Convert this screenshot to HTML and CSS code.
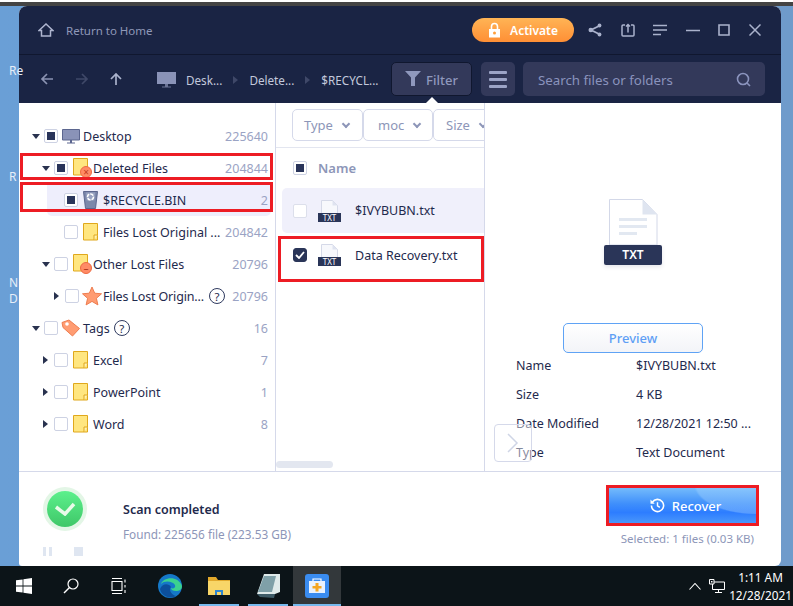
FILE: index.html
```html
<!DOCTYPE html>
<html lang="en">
<head>
    <meta charset="UTF-8">
    <title>Data Recovery</title>
    <link rel="stylesheet" href="styles.css">
</head>
<body>

<svg class="sprite" width="0" height="0">
    <symbol id="folder" viewBox="0 0 15 18"><path d="M.5.5h14v16.500H.5z" fill="#ffe680" stroke="#e0a81c"/><path d="M11 17v-5h3.500" fill="#fff3b8" stroke="#e0a81c"/></symbol>
    <symbol id="folder-plain" viewBox="0 0 15 18"><path d="M.5.5h14v16.500H.5z" fill="#ffe680" stroke="#e0a81c"/></symbol>
    <symbol id="monitor" viewBox="0 0 18 15"><path d="M.5.5h17v10.500H.5z" fill="#8a93b8" stroke="#5c668f"/><path d="M8 11h2v2.500H8zM5 13.500h8v1H5z" fill="#5c668f"/></symbol>
    <symbol id="txt-small" viewBox="0 0 23 22"><path d="M3.500.5h11l5 5V15h-16z" fill="#f7f8fc" stroke="#d5d9e8"/><path d="M14.500.5v5h5z" fill="#dfe3f0"/><path d="M0 13h23v9H0z" fill="#2a3558"/></symbol>
</svg>

<div class="top-strip"></div>

<div class="desktop">
    <span class="desk-label label-a">Re</span>
    <span class="desk-label label-b">R</span>
    <span class="desk-label label-c">N</span>
    <span class="desk-label label-d">D</span>

    <div class="window">
        <!-- Title bar -->
        <div class="title-bar">
            <svg class="home-icon" viewBox="0 0 16 14" width="16" height="14"><path d="M1 7.500 8 1l7 6.500h-2.500V13h-9V7.500z" fill="none" stroke="#aeb5cf" stroke-width="1.500"/></svg>
            <span class="home-text">Return to Home</span>
            <button class="activate">
                <svg viewBox="0 0 13 16" width="13" height="16"><path d="M3.500 7V4.500a3 3 0 0 1 6 0V7" fill="none" stroke="#fff" stroke-width="1.600"/><path d="M1 7h11v8.500H1z" fill="#fff"/><circle cx="6.500" cy="11" r="1.500" fill="#ff9f3a"/></svg>
                Activate
            </button>
            <div class="win-icons">
                <svg viewBox="0 0 14 14" width="14" height="14"><path d="M12 2.500 3 7l9 4.500" fill="none" stroke="#aab2cc" stroke-width="1.800"/><circle cx="2.800" cy="7" r="2.300" fill="#aab2cc"/><circle cx="11.500" cy="2.500" r="1.900" fill="#aab2cc"/><circle cx="11.500" cy="11.500" r="1.900" fill="#aab2cc"/></svg>
                <svg viewBox="0 0 14 14" width="14" height="14"><path d="M4 2H2a1 1 0 0 0-1 1v9a1 1 0 0 0 1 1h10a1 1 0 0 0 1-1V3a1 1 0 0 0-1-1h-2" fill="none" stroke="#aab2cc" stroke-width="1.500"/><path d="M7 9.500V1.500M5 3.500l2-2 2 2" fill="none" stroke="#aab2cc" stroke-width="1.500"/></svg>
                <svg viewBox="0 0 14 12" width="14" height="12"><path d="M0 1.500h14M0 6h14M0 10.500h8" stroke="#aab2cc" stroke-width="1.500"/></svg>
                <svg viewBox="0 0 14 14" width="14" height="14"><path d="M0 7.500h14" stroke="#aab2cc" stroke-width="1.500"/></svg>
                <svg viewBox="0 0 12 12" width="12" height="12"><path d="M1 1h10v10H1z" fill="none" stroke="#aab2cc" stroke-width="1.600"/></svg>
                <svg viewBox="0 0 12 12" width="12" height="12"><path d="m.5.5 11 11M11.500.5l-11 11" stroke="#aab2cc" stroke-width="1.500"/></svg>
            </div>
        </div>

        <!-- Navigation -->
        <div class="nav-bar">
            <div class="nav-arrows">
                <svg viewBox="0 0 14 14" width="14" height="14"><path d="M13 7H2M7 2 2 7l5 5" fill="none" stroke="#8b93b2" stroke-width="1.700"/></svg>
                <svg viewBox="0 0 14 14" width="14" height="14"><path d="M1 7h11M7 2l5 5-5 5" fill="none" stroke="#3f4868" stroke-width="1.700"/></svg>
                <svg viewBox="0 0 14 14" width="14" height="14"><path d="M7 13V2M2 7l5-5 5 5" fill="none" stroke="#aab2cc" stroke-width="1.700"/></svg>
            </div>
            <div class="crumbs">
                <svg class="crumb-pc" viewBox="0 0 19 16" width="19" height="16"><path d="M0 0h19v12H0z" fill="#8a93b8"/><path d="M8 12h3v2.500H8zM5 14.500h9v1H5z" fill="#6b7496"/></svg>
                <span class="crumb">Desk...</span>
                <span class="crumb-sep"></span>
                <span class="crumb">Delete...</span>
                <span class="crumb-sep"></span>
                <span class="crumb">$RECYCL...</span>
            </div>
            <button class="filter-btn">
                <svg viewBox="0 0 16 15" width="16" height="15"><path d="M0 0h16L10 6.500V15H6V6.500z" fill="#8f98bd"/></svg>
                Filter
            </button>
            <button class="menu-btn"><span></span><span></span><span></span></button>
            <div class="search">
                <span>Search files or folders</span>
                <svg viewBox="0 0 15 15" width="15" height="15"><circle cx="7" cy="7" r="5.500" fill="none" stroke="#8a93bd" stroke-width="1.600"/><path d="m11 11 3 3" stroke="#8a93bd" stroke-width="1.600"/></svg>
            </div>
        </div>

        <!-- Main panels -->
        <div class="panels">
            <div class="tree">
                <div class="row">
                    <span class="caret down"></span><span class="check partial"></span>
                    <svg class="icon" width="18" height="15"><use href="#monitor"/></svg>
                    <span class="name">Desktop</span><span class="count">225640</span>
                </div>
                <div class="row lvl1">
                    <span class="caret down"></span><span class="check partial"></span>
                    <span class="icon-wrap"><svg width="15" height="18"><use href="#folder-plain"/></svg><span class="badge">×</span></span>
                    <span class="name">Deleted Files</span><span class="count">204844</span>
                </div>
                <div class="row lvl2 selected">
                    <span class="check partial"></span>
                    <svg class="icon" viewBox="0 0 15 18" width="15" height="18"><path d="M.5.5h14l-2 17h-10z" fill="#7c87ab" stroke="#5c668f"/><path d="M3 1.500h9l-.7 8H3.700z" fill="#98a2c2"/><circle cx="7.500" cy="6" r="3" fill="none" stroke="#fff" stroke-width="1.600" stroke-dasharray="3.500 1"/></svg>
                    <span class="name">$RECYCLE.BIN</span><span class="count">2</span>
                </div>
                <div class="row lvl2">
                    <span class="check"></span>
                    <svg class="icon" width="15" height="18"><use href="#folder"/></svg>
                    <span class="name">Files Lost Original ...</span><span class="count">204842</span>
                </div>
                <div class="row lvl1">
                    <span class="caret down"></span><span class="check"></span>
                    <span class="icon-wrap"><svg width="15" height="18"><use href="#folder-plain"/></svg><span class="badge minus">–</span></span>
                    <span class="name">Other Lost Files</span><span class="count">20796</span>
                </div>
                <div class="row lvl2 has-caret">
                    <span class="caret right"></span><span class="check"></span>
                    <svg class="icon star" viewBox="0 0 20 20" width="20" height="20"><path d="m10 1 2.700 6.200 6.800.6-5.100 4.500 1.500 6.600L10 15.400l-5.900 3.500 1.500-6.600L.5 7.800l6.800-.6z" fill="#ff9c72" stroke="#ee7d50"/></svg>
                    <span class="name name-short">Files Lost Origin...</span><span class="help">?</span><span class="count">20796</span>
                </div>
                <div class="row">
                    <span class="caret down"></span><span class="check"></span>
                    <svg class="icon tag" viewBox="0 0 20 18" width="20" height="18"><path d="M1 3.500 8 1l10.500 8.500-7 7.500L2 8.500z" fill="#ff9c72" stroke="#ee7d50" stroke-linejoin="round"/><circle cx="6" cy="5" r="1.800" fill="#fff"/></svg>
                    <span class="name">Tags</span><span class="help">?</span><span class="count">16</span>
                </div>
                <div class="row lvl1">
                    <span class="caret right"></span><span class="check"></span>
                    <svg class="icon" width="15" height="18"><use href="#folder"/></svg>
                    <span class="name">Excel</span><span class="count">7</span>
                </div>
                <div class="row lvl1">
                    <span class="caret right"></span><span class="check"></span>
                    <svg class="icon" width="15" height="18"><use href="#folder"/></svg>
                    <span class="name">PowerPoint</span><span class="count">1</span>
                </div>
                <div class="row lvl1">
                    <span class="caret right"></span><span class="check"></span>
                    <svg class="icon" width="15" height="18"><use href="#folder"/></svg>
                    <span class="name">Word</span><span class="count">8</span>
                </div>
            </div>

            <div class="list">
                <div class="filters">
                    <div class="chip chip-type"><span>Type</span><i class="chev"></i></div>
                    <div class="chip chip-mod"><span>moc</span><i class="chev"></i></div>
                    <div class="chip chip-size"><span>Size</span><i class="chev"></i></div>
                </div>
                <div class="list-head"><span class="check partial"></span><span>Name</span></div>
                <div class="file hover">
                    <span class="check"></span>
                    <span class="txt-icon"><svg width="23" height="22"><use href="#txt-small"/></svg><b>TXT</b></span>
                    <span>$IVYBUBN.txt</span>
                </div>
                <div class="file">
                    <span class="check checked"><svg viewBox="0 0 10 8" width="10" height="8"><path d="m1 4 3 3 5-6" fill="none" stroke="#fff" stroke-width="1.800"/></svg></span>
                    <span class="txt-icon"><svg width="23" height="22"><use href="#txt-small"/></svg><b>TXT</b></span>
                    <span>Data Recovery.txt</span>
                </div>
                <div class="scroll-thumb"></div>
            </div>

            <div class="details">
                <div class="big-file">
                    <svg viewBox="0 0 50 46" width="50" height="46"><path d="M1.500.5h33l14.500 15V46H1.500z" fill="#fff" stroke="#d3d8e8"/><path d="M34.500.5v15H49z" fill="#dfe5f0"/><path d="M11 19h28v3H11zM11 26h28v3H11zM11 33h18v3H11z" fill="#e2e8f1"/></svg>
                    <span class="big-tag">TXT</span>
                </div>
                <button class="preview">Preview</button>
                <dl class="props">
                    <dt>Name</dt><dd>$IVYBUBN.txt</dd>
                    <dt>Size</dt><dd>4 KB</dd>
                    <dt>Date Modified</dt><dd>12/28/2021 12:50 ...</dd>
                    <dt>Type</dt><dd>Text Document</dd>
                </dl>
                <div class="next-btn"><svg viewBox="0 0 12 20" width="12" height="20"><path d="m1 1 9 9-9 9" fill="none" stroke="#cfd5e6" stroke-width="1.500"/></svg></div>
            </div>
        </div>

        <!-- Footer -->
        <div class="footer">
            <div class="status">
                <div class="ok-icon"><svg viewBox="0 0 22 14" width="22" height="14"><path d="m2 5 9 7 9-10" fill="none" stroke="#e9fbe9" stroke-width="3.500"/></svg></div>
                <div class="player"><span class="pause"></span><span class="stop"></span></div>
            </div>
            <div class="scan-text">
                <strong>Scan completed</strong>
                <span>Found: 225656 file (223.53 GB)</span>
            </div>
            <div class="recover-box">
                <button class="recover">
                    <svg viewBox="0 0 16 16" width="15" height="15"><path d="M2.500 4.500A6.500 6.500 0 1 1 1.500 8" fill="none" stroke="#fff" stroke-width="1.700"/><path d="M.5 1.500v4.500h4.500z" fill="#fff"/><path d="M8 4.500V8.500l2.500 1.500" fill="none" stroke="#fff" stroke-width="1.500"/></svg>
                    Recover
                </button>
                <span>Selected: 1 files (0.03 KB)</span>
            </div>
        </div>
    </div>

    <!-- Red annotation boxes -->
    <div class="mark mark-deleted"></div>
    <div class="mark mark-recycle"></div>
    <div class="mark mark-data"></div>
    <div class="mark mark-recover"></div>
</div>

<!-- Taskbar -->
<div class="taskbar">
    <div class="task-item"><svg viewBox="0 0 16 16" width="16" height="16"><path d="M0 2.300 6.600 1.400v6.200H0zM7.400 1.300 16 0v7.600H7.400zM0 8.400h6.600v6.200L0 13.700zM7.400 8.400H16V16l-8.600-1.300z" fill="#fff"/></svg></div>
    <div class="task-item"><svg class="nudge" viewBox="0 0 16 16" width="16" height="16"><circle cx="10" cy="6" r="5" fill="none" stroke="#fff" stroke-width="1.200"/><path d="M6.500 9.500 1 15" stroke="#fff" stroke-width="1.500"/></svg></div>
    <div class="task-item"><svg class="nudge" viewBox="0 0 16 16" width="16" height="16"><path d="M1 .5h10M1 15.500h10M1 3.500h10v9H1zM14 1.500v3M14 7v2.500M14 12v3" fill="none" stroke="#fff" stroke-width="1.100"/></svg></div>
    <div class="task-apps">
        <div class="task-item"><svg viewBox="0 0 24 24" width="24" height="24"><circle cx="12" cy="12" r="12" fill="#1578c8"/><path d="M3 10C5 3 20 1 24 12c0 4-3 5-6 5-3 0-5-1-5-3 2 1 5 0 4-3-2-4-11-5-14-1z" fill="#3bd18f"/><path d="M2 15c2-6 9-6 11-2-2 2-1 7 5 9-7 4-15-1-16-7z" fill="#0c4f9c"/></svg></div>
        <div class="task-item running"><svg viewBox="0 0 22 20" width="22" height="20"><path d="M0 1h8l2 3h12v4H0z" fill="#e2a92c"/><path d="M0 5h22v14H0z" fill="#f8d668"/><path d="M7 14h8v5H7z" fill="#2f86d0"/><path d="M9 16h4v3H9z" fill="#f8d668"/></svg></div>
        <div class="task-item running"><svg viewBox="0 0 23 24" width="23" height="24"><path d="M7 0h16v18l-5 2H0z" fill="#dfeaea"/><path d="M7 2h12l-4 16H1z" fill="#7fa0a8"/><path d="M0 20l3 3 14 1 1-4z" fill="#3f5c68"/></svg></div>
        <div class="task-item running active"><svg viewBox="0 0 24 24" width="24" height="24"><rect width="24" height="24" rx="3" fill="#3a8cf0"/><path d="M8 7V5h8v2" fill="none" stroke="#fff" stroke-width="1.200"/><path d="M4 7h16v12H4z" fill="#e9f2ff"/><path d="M10.500 9h3v3h3v2.500h-3v3h-3v-3h-3V12h3z" fill="#f4a623"/></svg></div>
    </div>
    <div class="tray">
        <svg class="tray-up" viewBox="0 0 12 7" width="12" height="7"><path d="m.5 6.500 5.500-6 5.500 6" fill="none" stroke="#fff" stroke-width="1.100"/></svg>
        <svg viewBox="0 0 16 14" width="16" height="14"><path d="M3.500 3H15.500v7.500H3.500zM9.500 10.500v2.500M6 13.500h7" fill="none" stroke="#fff"/><path d="M.5.500h4.500v4.500H.5z" fill="#0c1418" stroke="#fff"/><path d="M2 2h1.500v1.500H2z" fill="#fff"/></svg>
        <div class="clock"><span>1:11 AM</span><span>12/28/2021</span></div>
    </div>
</div>

</body>
</html>
```

FILE: styles.css
```css
* {
    box-sizing: border-box;
}
body {
    margin: 0;
    width: 793px;
    height: 606px;
    overflow: hidden;
    display: flex;
    flex-direction: column;
    font-family: "Noto Sans", sans-serif;
    font-size: 12.5px;
    color: #1f2a4d;
    background-color: #fff;
}
button {
    font-family: inherit;
    border: none;
}
.sprite {
    position: absolute;
}
.top-strip {
    height: 4px;
    margin-top: 2px;
    background-color: #444;
    flex: none;
}
.desktop {
    position: relative;
    flex: 1;
    min-height: 0;
    padding-left: 19px;
    padding-right: 12px;
    background: linear-gradient(90deg, #6a9fd6 0, #6f9bcb 100%);
}
.desk-label {
    position: absolute;
    left: 9px;
    color: #e6eef8;
    font-size: 12px;
}
.label-a { top: 56px; }
.label-b { top: 162px; }
.label-c { top: 268px; }
.label-d { top: 284px; }

.window {
    height: 100%;
    display: flex;
    flex-direction: column;
    background-color: #fff;
    border-radius: 8px 8px 6px 3px;
    overflow: hidden;
}

/* Title bar */
.title-bar {
    height: 49px;
    flex: none;
    display: flex;
    align-items: center;
    padding-right: 20px;
    background-color: #1a2444;
    border-bottom: 1px solid #10172f;
    color: #8f98b8;
}
.home-icon {
    margin-left: 19px;
}
.home-text {
    margin-left: 12px;
    font-size: 11.500px;
}
.activate {
    margin-left: auto;
    width: 102px;
    height: 24px;
    display: flex;
    align-items: center;
    justify-content: center;
    gap: 9px;
    border-radius: 12px;
    background: linear-gradient(#ffb455, #ff8f35);
    color: #fff;
    font-size: 12px;
    font-weight: 600;
}
.win-icons {
    margin-left: 14px;
    display: flex;
    align-items: center;
    gap: 18.600px;
}

/* Navigation */
.nav-bar {
    height: 48px;
    flex: none;
    display: flex;
    align-items: center;
    padding-left: 21px;
    background-color: #1a2444;
}
.nav-arrows {
    display: flex;
    gap: 20.500px;
}
.crumbs {
    margin-left: 34px;
    width: 234px;
    display: flex;
    align-items: center;
    padding-top: 1px;
    color: #c3c9dc;
    font-size: 11.700px;
}
.crumb-pc {
    margin-right: 10px;
}
.crumb-sep {
    width: 0;
    height: 0;
    margin: 0 11px;
    border-left: 5px solid #3f4868;
    border-top: 4px solid transparent;
    border-bottom: 4px solid transparent;
}
.filter-btn {
    position: relative;
    width: 81px;
    height: 34px;
    padding-top: 2px;
    display: flex;
    align-items: center;
    justify-content: center;
    gap: 5px;
    background-color: #33395a;
    border: 1px solid #10172f;
    border-radius: 5px;
    color: #8f98bd;
    font-size: 13px;
    font-weight: 500;
}
.filter-btn svg {
    margin-top: -2px;
}
.filter-btn::after {
    content: "";
    position: absolute;
    left: 34px;
    bottom: -8px;
    border-left: 6px solid transparent;
    border-right: 6px solid transparent;
    border-bottom: 6px solid #fff;
}
.menu-btn {
    width: 34px;
    height: 34px;
    margin-left: 9px;
    display: flex;
    flex-direction: column;
    align-items: center;
    justify-content: center;
    gap: 4px;
    background-color: #33395a;
    border-radius: 5px;
}
.menu-btn span {
    width: 18px;
    height: 3px;
    border-radius: 1px;
    background-color: #9ca4c6;
}
.search {
    width: 242px;
    height: 34px;
    margin-left: 8px;
    padding: 1px 14px 0 15px;
    display: flex;
    align-items: center;
    justify-content: space-between;
    background-color: #33395a;
    border-radius: 5px;
    color: #8a93bd;
    font-size: 13.300px;
}

/* Panels */
.panels {
    flex: 1;
    min-height: 0;
    display: flex;
    border-bottom: 1px solid #d5d9ea;
}
.tree {
    width: 257px;
    padding: 17px 7px 0 0;
    border-right: 1px solid #d5d9ea;
    flex: none;
}
.row {
    height: 32px;
    display: flex;
    align-items: center;
    padding-left: 12px;
}
.row .caret {
    margin-right: 4px;
}
.lvl1 {
    padding-left: 22px;
}
.lvl2 {
    padding-left: 45px;
}
.lvl2.has-caret {
    padding-left: 33px;
}
.selected {
    margin-left: 28px;
    margin-right: -3px;
    padding-left: 17px;
    padding-right: 3px;
    background-color: #eeeefc;
    border-radius: 0 0 5px 5px;
}
.caret {
    width: 9px;
    height: 9px;
    flex: none;
    display: flex;
    align-items: center;
    justify-content: center;
}
.caret.down::before {
    content: "";
    border-left: 4.500px solid transparent;
    border-right: 4.500px solid transparent;
    border-top: 5px solid #29324f;
}
.caret.right::before {
    content: "";
    border-top: 4.500px solid transparent;
    border-bottom: 4.500px solid transparent;
    border-left: 5px solid #29324f;
}
.check {
    width: 14px;
    height: 14px;
    flex: none;
    display: flex;
    align-items: center;
    justify-content: center;
    background-color: #fff;
    border: 1px solid #cdd2e3;
    border-radius: 2px;
}
.check.partial::before {
    content: "";
    width: 8px;
    height: 8px;
    background-color: #29345a;
}
.check.checked {
    background-color: #2a3558;
    border-color: #2a3558;
    border-radius: 3px;
}
.icon {
    margin-left: 4px;
    flex: none;
}
.lvl1 .icon,
.lvl2 .icon {
    margin-left: 5px;
}
.lvl2 .star,
.tag {
    margin-left: 3px;
}
.name {
    margin-left: 3px;
    white-space: nowrap;
}
.lvl1 .name,
.lvl2 .name {
    margin-left: 5px;
}
.lvl2 .star + .name {
    margin-left: 1px;
}
.tag + .name {
    margin-left: 2px;
}
.name-short {
    width: 102px;
    letter-spacing: -0.15px;
}
.icon-wrap {
    position: relative;
    width: 15px;
    height: 18px;
    margin-left: 5px;
    margin-top: -2px;
    flex: none;
}
.icon-wrap svg {
    display: block;
}
.badge {
    position: absolute;
    right: -4px;
    bottom: -2px;
    width: 12px;
    height: 12px;
    display: flex;
    align-items: center;
    justify-content: center;
    border-radius: 50%;
    background-color: #ff8b66;
    border: 1px solid #ee6a42;
    color: #c43a1e;
    font-size: 10px;
    line-height: 1;
}
.badge.minus {
    color: #b03418;
}
.count {
    margin-left: auto;
    color: #9aa3c4;
}
.help {
    width: 16px;
    height: 16px;
    margin-left: 4px;
    display: flex;
    align-items: center;
    justify-content: center;
    border: 1.500px solid #2f3a5f;
    border-radius: 50%;
    font-size: 11.500px;
}

/* File list */
.list {
    position: relative;
    width: 209px;
    flex: none;
    border-right: 1px solid #d5d9ea;
    overflow: hidden;
}
.filters {
    height: 45px;
    padding: 6px 0 0 16px;
    display: flex;
    border-bottom: 1px solid #e3e6f0;
}
.chip {
    height: 32px;
    display: flex;
    align-items: center;
    gap: 10px;
    padding-left: 11px;
    flex: none;
    border: 1px solid #d5d9ea;
    border-radius: 5px;
    color: #8d96b8;
    font-size: 13px;
}
.chip-type { width: 71px; }
.chip-mod { width: 70px; padding-left: 14px; }
.chip-size { width: 70px; padding-left: 12px; }
.chev {
    width: 6px;
    height: 6px;
    margin-top: -3px;
    border-right: 2px solid #8d96b8;
    border-bottom: 2px solid #8d96b8;
    transform: rotate(45deg);
}
.list-head {
    height: 40px;
    display: flex;
    align-items: center;
    gap: 11px;
    padding-left: 17px;
    color: #8d96b8;
    font-size: 13px;
    font-weight: 600;
}
.file {
    height: 45px;
    margin-left: 6px;
    padding: 0 0 1px 11px;
    display: flex;
    align-items: center;
}
.file.hover {
    padding-bottom: 0;
    background-color: #f0f0fb;
    border-radius: 5px 0 0 5px;
}
.file.hover .check {
    border-color: #dcdfeb;
}
.txt-icon {
    position: relative;
    width: 23px;
    height: 22px;
    margin: 0 14px 0 11px;
}
.txt-icon svg {
    display: block;
}
.txt-icon b {
    position: absolute;
    left: 0;
    right: 0;
    bottom: 0;
    color: #fff;
    font-size: 8px;
    font-weight: 400;
    line-height: 9px;
    text-align: center;
}
.scroll-thumb {
    position: absolute;
    left: 0;
    bottom: 3px;
    width: 57px;
    height: 7px;
    border-radius: 4px;
    background-color: #e3e7f0;
}

/* Details */
.details {
    position: relative;
    flex: 1;
    padding-top: 96px;
}
.big-file {
    width: 58px;
    height: 66px;
    margin-left: 119px;
    position: relative;
    text-align: center;
}
.big-file svg {
    display: block;
    margin-left: 4px;
}
.big-tag {
    position: absolute;
    left: 0;
    right: 0;
    bottom: 0;
    height: 20px;
    border-radius: 2px;
    background-color: #2a3558;
    color: #fff;
    font-size: 12px;
    font-weight: 600;
    line-height: 20px;
    box-shadow: 0 2px 4px rgba(40, 50, 90, 0.12);
}
.preview {
    display: block;
    width: 140px;
    height: 30px;
    margin: 58px 0 0 78px;
    border: 1px solid #5fa3f5;
    border-radius: 5px;
    background: linear-gradient(#fff, #f3f4f8);
    color: #5f9ff5;
    font-size: 13px;
    font-weight: 500;
}
.props {
    display: grid;
    grid-template-columns: 120px 1fr;
    grid-template-rows: 29px 29px 29px 28px;
    align-items: center;
    margin: -2px 0 0 31px;
    white-space: nowrap;
}
.props dd {
    margin: 0;
}
.next-btn {
    position: absolute;
    left: 9px;
    top: 321px;
    width: 38px;
    height: 38px;
    display: flex;
    align-items: center;
    justify-content: center;
    border: 1px solid #d5d9ea;
    border-radius: 4px;
    background-color: rgba(255, 255, 255, 0.45);
}

/* Footer */
.footer {
    height: 94px;
    flex: none;
    display: flex;
}
.status {
    position: relative;
    width: 104px;
    flex: none;
}
.ok-icon {
    position: absolute;
    left: 28px;
    top: 19px;
    width: 36px;
    height: 36px;
    display: flex;
    align-items: center;
    justify-content: center;
    border-radius: 50%;
    background: linear-gradient(#5cf08c, #3fc768);
    box-shadow: 0 0 0 4px #e3f6e6;
}
.player {
    position: absolute;
    left: 24px;
    top: 75px;
    display: flex;
    gap: 22px;
}
.pause {
    width: 9px;
    height: 9px;
    border-left: 3px solid #dfe6f1;
    border-right: 3px solid #dfe6f1;
}
.stop {
    width: 9px;
    height: 9px;
    background-color: #dfe6f1;
}
.scan-text {
    display: flex;
    flex-direction: column;
    gap: 8px;
    padding-top: 29px;
    color: #8d96b8;
    font-size: 11.800px;
}
.scan-text strong {
    color: #1f2a4d;
    font-size: 12.500px;
    font-weight: 600;
}
.recover-box {
    margin-left: auto;
    padding: 16px 27px 0 0;
    display: flex;
    flex-direction: column;
    align-items: flex-end;
    gap: 8px;
    color: #8d96b8;
    font-size: 11.500px;
}
.recover {
    width: 147px;
    height: 35px;
    margin-right: -2px;
    padding-left: 12px;
    display: flex;
    align-items: center;
    justify-content: center;
    gap: 7px;
    background:
        radial-gradient(ellipse 62px 30px at 100% -10%, rgba(170, 215, 255, 0.35) 0 96%, transparent 100%),
        linear-gradient(#74bbfb 0, #3f8ffb 45%, #2d7dff 70%, #4a97fb 100%);
    color: #fff;
    font-size: 13px;
    font-weight: 500;
}

/* Annotation boxes */
.mark {
    position: absolute;
    border: 3px solid #ed1c24;
}
.mark-deleted { left: 20px; top: 147px; width: 253px; height: 27px; }
.mark-recycle { left: 20px; top: 176px; width: 253px; height: 30px; }
.mark-data { left: 278px; top: 230px; width: 206px; height: 46px; }
.mark-recover { left: 606px; top: 479px; width: 153px; height: 41px; }

/* Taskbar */
.taskbar {
    height: 40px;
    flex: none;
    display: flex;
    align-items: center;
    background-color: #0c1418;
    color: #fff;
}
.task-apps {
    display: flex;
    gap: 1px;
    margin-left: 2px;
}
.task-item {
    width: 48px;
    height: 40px;
    flex: none;
    display: flex;
    align-items: center;
    justify-content: center;
    position: relative;
}
.nudge {
    margin-right: 2px;
}
.task-item.running::after {
    content: "";
    position: absolute;
    left: 4px;
    right: 4px;
    bottom: 0;
    height: 2px;
    background-color: #76b9ed;
}
.task-item.active {
    background-color: #33383b;
}
.task-item.active::after {
    left: 0;
    right: 0;
}
.tray {
    margin-left: auto;
    display: flex;
    align-items: center;
    gap: 10px;
    padding-right: 3px;
}
.tray-up {
    margin-right: -2px;
}
.clock {
    display: flex;
    flex-direction: column;
    align-items: center;
    width: 59px;
    margin-left: -4px;
    font-size: 11.800px;
    line-height: 18px;
    white-space: nowrap;
}
```
